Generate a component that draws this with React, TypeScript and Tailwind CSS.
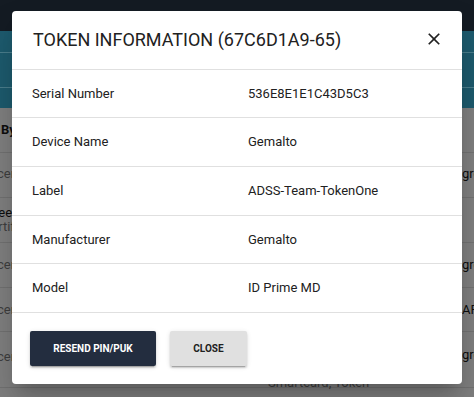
import React from "react";

const rows = [
  { label: "Serial Number", value: "536E8E1E1C43D5C3", h: "h-[48px]" },
  { label: "Device Name", value: "Gemalto", h: "h-[49px]" },
  { label: "Label", value: "ADSS-Team-TokenOne", h: "h-[49px]" },
  { label: "Manufacturer", value: "Gemalto", h: "h-[48px]" },
  { label: "Model", value: "ID Prime MD", h: "h-[49px]" },
];

function CloseIcon() {
  return (
    <svg width="20" height="20" viewBox="0 0 24 24" fill="#212121">
      <path d="M19 6.41L17.59 5 12 10.59 6.41 5 5 6.41 10.59 12 5 17.59 6.41 19 12 13.41 17.59 19 19 17.59 13.41 12z" />
    </svg>
  );
}

function TokenInfoDialog() {
  return (
    <div className="absolute left-[12px] top-[11px] w-[450px] rounded-[4px] bg-white shadow-[0_11px_15px_-7px_rgba(0,0,0,0.2),0_24px_38px_3px_rgba(0,0,0,0.14)]">
      {/* Header */}
      <div className="flex h-[59px] items-center justify-between border-b border-[#e0e0e0] px-[22px] pb-[2px]">
        <h2 className="-ml-px text-[18px] font-normal text-[#212121]">TOKEN INFORMATION (67C6D1A9-65)</h2>
        <button className="-mr-[4px] flex items-center justify-center">
          <CloseIcon />
        </button>
      </div>

      {/* Details */}
      {rows.map((r) => (
        <div
          key={r.label}
          className={`grid grid-cols-[216px_1fr] items-center border-b border-[#e0e0e0] px-5 text-[13px] text-[#212121] ${r.h}`}
        >
          <span>{r.label}</span>
          <span>{r.value}</span>
        </div>
      ))}

      {/* Actions */}
      <div className="flex gap-[14px] px-[18px] pb-[18px] pt-[18px]">
        <button className="h-[35px] w-[126px] rounded-[2px] bg-[#232d3f] text-[10px] font-bold text-white shadow-[0_3px_1px_-2px_rgba(0,0,0,0.2),0_2px_2px_0_rgba(0,0,0,0.14),0_1px_5px_0_rgba(0,0,0,0.12)]">
          RESEND PIN/PUK
        </button>
        <button className="h-[35px] w-[77px] rounded-[2px] bg-[#e0e0e0] text-[10px] font-bold text-[#212121] shadow-[0_3px_1px_-2px_rgba(0,0,0,0.2),0_2px_2px_0_rgba(0,0,0,0.14),0_1px_5px_0_rgba(0,0,0,0.12)]">
          CLOSE
        </button>
      </div>
    </div>
  );
}

export default function App() {
  return (
    <div className="relative h-[397px] w-[474px] overflow-hidden bg-[#7f7f7f] font-['Roboto',sans-serif]">
      {/* dimmed page behind the dialog */}
      <div className="h-[31px] bg-[#141b23]" />
      <div className="h-[77px] bg-[#1d5a6d]">
        <div className="h-[22px] border-b border-[#4a7d8c]" />
        <div className="h-[35px] border-b border-[#4a7d8c]" />
      </div>

      <div className="text-[13px]">
        <div className="flex h-[45px] items-center border-b border-[#717171] font-bold text-[#0d0d0d]">
          <span className="-ml-[41px]">Issued By</span>
        </div>
        <div className="flex h-[45px] items-center border-b border-[#717171] pb-[2px]">
          <span className="w-[268px] shrink-0 text-[#3e3e3e]"><span className="-ml-[23px]">Officer</span></span>
          <span className="w-[194px] shrink-0" />
          <span className="text-[#0d0d0d]">group</span>
        </div>
        <div className="flex h-[45px] flex-col justify-center border-b border-[#717171] leading-[14px]">
          <span className="-ml-[13px] text-[#0d0d0d]">Free</span>
          <span className="-ml-[17px] text-[#3e3e3e]">Certificate</span>
        </div>
        <div className="flex h-[45px] items-center border-b border-[#717171]">
          <span className="w-[268px] shrink-0 text-[#3e3e3e]"><span className="-ml-[23px]">Officer</span></span>
          <span className="w-[194px] shrink-0" />
          <span className="text-[#0d0d0d]">group</span>
        </div>
        <div className="flex h-[44px] items-center border-b border-[#717171]">
          <span className="w-[268px] shrink-0 text-[#3e3e3e]"><span className="-ml-[23px]">Officer</span></span>
          <span className="w-[194px] shrink-0" />
          <span className="text-[#0d0d0d]">AFS</span>
        </div>
        <div className="flex h-[56px] items-start border-b border-[#717171] pt-[13px]">
          <span className="w-[268px] shrink-0 pt-[2px] text-[#3e3e3e]"><span className="-ml-[23px]">Officer</span></span>
          <span className="w-[194px] shrink-0 pt-[31px] leading-[14px] text-[#3e3e3e]">Smartcard, Token</span>
          <span className="text-[#0d0d0d]">group</span>
        </div>
      </div>

      <TokenInfoDialog />
    </div>
  );
}
